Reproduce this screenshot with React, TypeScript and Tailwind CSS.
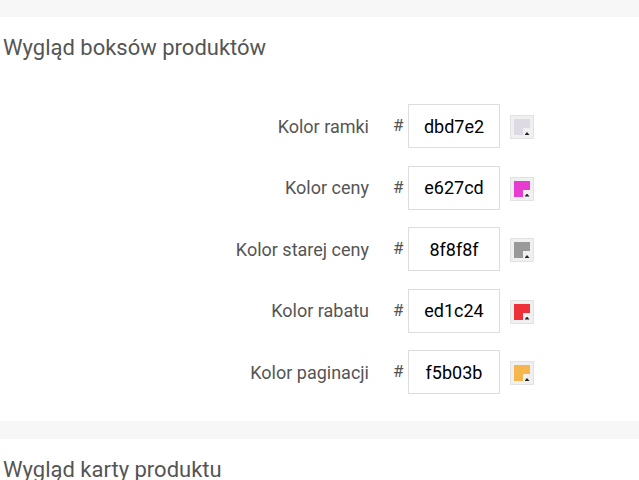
import React from "react";

const rows = [
  { label: "Kolor ramki", value: "dbd7e2" },
  { label: "Kolor ceny", value: "e627cd" },
  { label: "Kolor starej ceny", value: "8f8f8f" },
  { label: "Kolor rabatu", value: "ed1c24" },
  { label: "Kolor paginacji", value: "f5b03b" },
];

const Swatch = ({ color }: { color: string }) => (
  <div className="relative w-[24px] h-[24px] border border-[#e2e2e2] bg-[#f0f0f0] p-[3px]">
    <div className="w-full h-full opacity-90" style={{ backgroundColor: "#" + color }} />
    <div className="absolute right-[2px] bottom-[2px] w-[8px] h-[8px] bg-[#f0f0f0] flex items-end justify-center pb-[1px]">
      <div className="w-[5px] h-[3px] bg-[#222] [clip-path:polygon(50%_0,100%_100%,0_100%)]" />
    </div>
  </div>
);

export default function App() {
  return (
    <div className="w-[639px] h-[480px] overflow-hidden bg-white font-['Roboto',sans-serif]">
      <div className="h-[17px] bg-[#f7f7f7]" />
      <h2 className="pt-[17px] pl-[3px] text-[22px] leading-[28px] text-[#555]">
        Wygląd boksów produktów
      </h2>
      <div className="mt-[42px] flex flex-col gap-[17.5px]">
        {rows.map((r) => (
          <div key={r.label} className="flex items-center h-[44px]">
            <div className="w-[369px] text-right text-[18px] text-[#555]">{r.label}</div>
            <div className="ml-[24px] w-[10px] text-[17px] text-[#555]">#</div>
            <div className="ml-[5px] w-[92px] h-[44px] border border-[#ddd] flex items-center justify-center text-[18px] text-black">
              {r.value}
            </div>
            <div className="ml-[10px] mt-[2px]">
              <Swatch color={r.value} />
            </div>
          </div>
        ))}
      </div>
      <div className="mt-[27px] h-[18px] bg-[#f7f7f7]" />
      <h2 className="pt-[17px] pl-[3px] text-[22px] leading-[28px] text-[#555]">
        Wygląd karty produktu
      </h2>
    </div>
  );
}
